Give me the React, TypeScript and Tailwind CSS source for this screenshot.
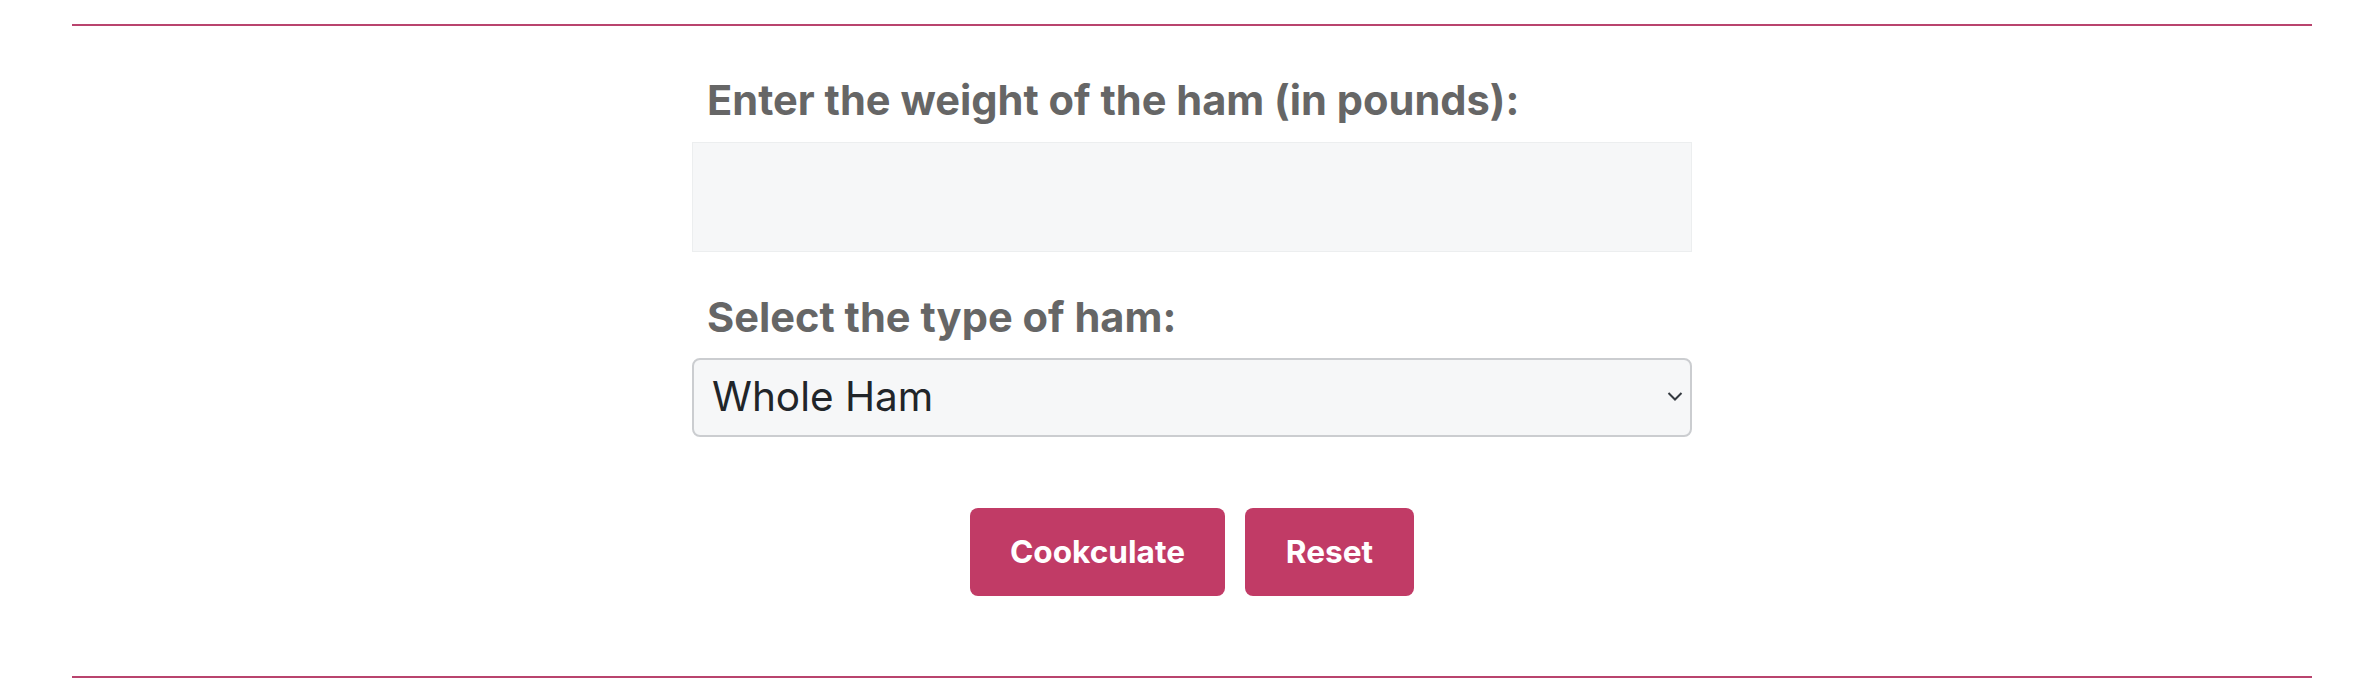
import React, { useState } from "react"

const HAM_TYPES = ["Whole Ham", "Half Ham", "Spiral Ham", "Boneless Ham"]

const Divider = () => <div className="h-[2px] w-full bg-[#b9446e]" />

export default function App() {
	const [weight, setWeight] = useState("")
	const [hamType, setHamType] = useState(HAM_TYPES[0])

	return (
		<div className="min-h-[700px] bg-white font-['Inter','Noto_Sans',sans-serif]">
			<div className="ml-[72px] w-[2240px] pt-[24px]">
				<Divider />
				<form
					className="mx-auto flex w-[1000px] flex-col pt-[50px]"
					onSubmit={(e) => e.preventDefault()}
				>
					<label
						htmlFor="weight"
						className="pl-[15px] text-[41.6px] leading-[48px] font-bold text-[#666666]"
					>
						Enter the weight of the ham (in pounds):
					</label>
					<input
						id="weight"
						type="text"
						inputMode="decimal"
						value={weight}
						onChange={(e) => setWeight(e.target.value)}
						className="mt-[18px] h-[110px] w-full border border-[#eceeef] bg-[#f6f7f8] px-[18px] text-[40.5px] text-[#212529] outline-none"
					/>
					<label
						htmlFor="ham-type"
						className="mt-[41px] pl-[15px] text-[41.6px] leading-[48px] font-bold text-[#666666]"
					>
						Select the type of ham:
					</label>
					<div className="relative mt-[17px]">
						<select
							id="ham-type"
							value={hamType}
							onChange={(e) => setHamType(e.target.value)}
							className="h-[79px] w-full appearance-none rounded-[8px] border-2 border-[#cbcdd0] bg-[#f6f7f8] pl-[18px] pr-[40px] text-[40.5px] text-[#212529] outline-none"
						>
							{HAM_TYPES.map((t) => (
								<option key={t} value={t}>
									{t}
								</option>
							))}
						</select>
						<svg
							className="pointer-events-none absolute right-[9px] top-[33px] h-[11px] w-[16px]"
							viewBox="0 0 16 11"
							fill="none"
						>
							<path d="M1.5 2 8 8.5 14.5 2" stroke="#343a40" strokeWidth="2" />
						</svg>
					</div>
					<div className="mt-[71px] flex justify-center gap-[20px]">
						<button
							type="submit"
							className="h-[88px] w-[255px] rounded-[8px] bg-[#c13b66] text-[31.6px] font-bold text-white"
						>
							Cookculate
						</button>
						<button
							type="button"
							onClick={() => {
								setWeight("")
								setHamType(HAM_TYPES[0])
							}}
							className="h-[88px] w-[169px] rounded-[8px] bg-[#c13b66] text-[31.6px] font-bold text-white"
						>
							Reset
						</button>
					</div>
				</form>
				<div className="mt-[80px]">
					<Divider />
				</div>
			</div>
		</div>
	)
}
